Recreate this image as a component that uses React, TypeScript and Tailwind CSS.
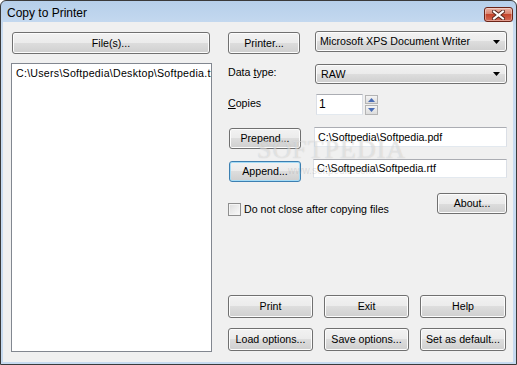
import React from "react";

const btn =
  "flex items-center justify-center border border-[#707070] rounded-[3px] bg-[linear-gradient(#f2f2f2_0%,#ebebeb_50%,#dddddd_50%,#cfcfcf_100%)] shadow-[inset_0_0_0_1px_#fcfcfc] text-black";
const btnFocus =
  "flex items-center justify-center border border-[#3c7fb1] rounded-[3px] bg-[linear-gradient(#f2f2f2_0%,#ebebeb_50%,#dddddd_50%,#cfcfcf_100%)] shadow-[inset_0_0_0_1px_#a6dcf6] text-black";
const combo =
  "flex items-center border border-[#707070] rounded-[3px] bg-[linear-gradient(#f2f2f2_0%,#ebebeb_50%,#dddddd_50%,#cfcfcf_100%)] shadow-[inset_0_0_0_1px_#fcfcfc] text-black";
const field =
  "flex items-center bg-white border border-[#abadb3] border-l-[#dbdfe6] border-r-[#dbdfe6] border-b-[#e3e9ef] whitespace-nowrap overflow-hidden";

function Arrow() {
  return (
    <svg width="7" height="4" viewBox="0 0 7 4" className="ml-auto mr-[6px] shrink-0">
      <path d="M0 0H7L3.5 4Z" fill="#000" />
    </svg>
  );
}

export default function App() {
  return (
    <div className="w-[517px] h-[365px] bg-white font-['Liberation_Sans',Arial,sans-serif] text-[10.65px] leading-[13px] text-black">
      <div className="w-[517px] h-[365px] flex flex-col border border-[#3a3a3a] rounded-t-[6px] bg-[linear-gradient(#b6cfea,#c9dcf1_30px,#c6daf0)] overflow-hidden">
        {/* title bar */}
        <div className="h-[21px] flex items-start shrink-0">
          <div className="pl-[6px] pt-[5px] text-[12px] leading-[15px] text-black">Copy to Printer</div>
          <div className="ml-auto mr-[3px] mt-[6px] w-[29px] h-[15px] rounded-[3px] border border-[#6b2417] bg-[linear-gradient(#eab3a6_0%,#d98470_45%,#c5452d_50%,#d46a55_100%)] shadow-[inset_0_0_0_1px_rgba(255,255,255,0.35)] flex items-center justify-center">
            <svg width="13" height="10" viewBox="0 0 13 10">
              <path d="M2 1.5L11 8.5M11 1.5L2 8.5" stroke="#5a2a22" strokeWidth="4" strokeLinecap="square" />
              <path d="M2 1.5L11 8.5M11 1.5L2 8.5" stroke="#ffffff" strokeWidth="2" strokeLinecap="square" />
            </svg>
          </div>
        </div>

        {/* client */}
        <div className="relative flex-1 ml-[2px] mr-[3px] mb-[2px] bg-[#f0f0f0] flex pl-[8px] pt-[9px]">
          {/* left column */}
          <div className="w-[201px] flex flex-col">
            <div className={btn + " ml-[1px] mt-[1px] w-[198px] h-[22px]"}>File(s)...</div>
            <div className="mt-[9px] h-[289px] bg-white border border-[#828790] overflow-hidden">
              <div className="pl-[4px] pt-[3px] whitespace-nowrap tracking-[0.25px]">{"C:\\Users\\Softpedia\\Desktop\\Softpedia.txt"}</div>
            </div>
          </div>

          {/* right column */}
          <div className="ml-[16px] w-[279px] flex flex-col pb-[11px]">
            {/* row 1 */}
            <div className="flex items-start">
              <div className={btn + " mt-[1px] w-[72px] h-[22px]"}>Printer...</div>
              <div className={combo + " ml-[15px] w-[192px] h-[21px] pl-[4px]"}>
                <span>Microsoft XPS Document Writer</span>
                <Arrow />
              </div>
            </div>
            {/* row 2 */}
            <div className="flex items-start mt-[10px]">
              <div className="w-[87px] pt-[2px]">
                Data <span className="underline">t</span>ype:
              </div>
              <div className={combo + " w-[192px] h-[20px] pl-[5px]"}>
                <span>RAW</span>
                <Arrow />
              </div>
            </div>
            {/* row 3 */}
            <div className="flex items-start mt-[10px]">
              <div className="w-[88px] pt-[3px]">
                <span className="underline">C</span>opies
              </div>
              <div className={field + " w-[47px] h-[21px] pl-[2px] text-[12px]"}>1</div>
              <div className="ml-[2px] mt-[1px] flex flex-col gap-[1px]">
                <div className="w-[13px] h-[9px] border border-[#b4b4b4] bg-[linear-gradient(#f4f4f4,#dcdcdc)] flex items-center justify-center">
                  <svg width="7" height="4" viewBox="0 0 7 4"><path d="M0 4H7L3.5 0Z" fill="#4a6db5" /></svg>
                </div>
                <div className="w-[13px] h-[10px] border border-[#b4b4b4] bg-[linear-gradient(#f4f4f4,#dcdcdc)] flex items-center justify-center">
                  <svg width="7" height="4" viewBox="0 0 7 4"><path d="M0 0H7L3.5 4Z" fill="#4a6db5" /></svg>
                </div>
              </div>
            </div>
            {/* row 4 */}
            <div className="flex items-start mt-[12px]">
              <div className={btn + " ml-[1px] mt-[1px] w-[72px] h-[21px]"}>Prepend...</div>
              <div className={field + " ml-[13px] w-[193px] h-[20px] pl-[3px]"}>{"C:\\Softpedia\\Softpedia.pdf"}</div>
            </div>
            {/* row 5 */}
            <div className="flex items-start mt-[10px]">
              <div className={btnFocus + " ml-[1px] mt-[2px] w-[72px] h-[21px]"}>Append...</div>
              <div className={field + " ml-[12px] w-[194px] h-[19px] pl-[3px]"}>{"C:\\Softpedia\\Softpedia.rtf"}</div>
            </div>
            {/* row 6 */}
            <div className="flex items-start mt-[11px]">
              <div className="mt-[10px] flex items-center">
                <div className="w-[13px] h-[13px] border border-[#8f8f8f] bg-[linear-gradient(135deg,#dcdcdc,#fbfbfb)] shadow-[inset_0_0_0_1px_#f4f4f4]"></div>
                <span className="ml-[3px]">Do not close after copying files</span>
              </div>
              <div className={btn + " ml-auto w-[70px] h-[21px]"}>About...</div>
            </div>

            {/* bottom rows */}
            <div className="mt-auto flex gap-[11px]">
              <div className={btn + " w-[85px] h-[23px]"}>Print</div>
              <div className={btn + " w-[85px] h-[23px]"}>Exit</div>
              <div className={btn + " w-[86px] h-[23px]"}>Help</div>
            </div>
            <div className="mt-[10px] flex gap-[11px]">
              <div className={btn + " w-[85px] h-[23px]"}>Load options...</div>
              <div className={btn + " w-[85px] h-[23px]"}>Save options...</div>
              <div className={btn + " w-[86px] h-[23px]"}>Set as default...</div>
            </div>
          </div>

          {/* watermark overlay */}
          <div className="pointer-events-none absolute left-[254px] top-[115px] font-['Liberation_Serif',serif] text-[26px] leading-[26px] tracking-[1px] text-[rgba(255,255,255,0.45)] [text-shadow:0_0_1px_rgba(120,120,120,0.35)]">
            SOFTPEDIA
          </div>
          <div className="pointer-events-none absolute left-[285px] top-[144px] text-[10px] leading-[10px] text-[rgba(160,160,160,0.3)]">
            www.softpedia.com
          </div>
        </div>
      </div>
    </div>
  );
}
